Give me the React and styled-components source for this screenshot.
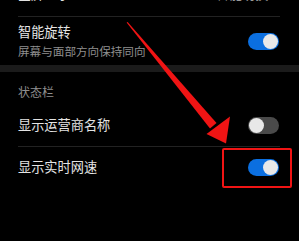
import React from "react";
import styled, { createGlobalStyle } from "styled-components";

const Global = createGlobalStyle`
  html, body { margin: 0; padding: 0; background: #000; }
  body { font-family: "Noto Sans CJK SC", "Noto Sans", sans-serif; }
`;

const Page = styled.div`
  position: relative;
  width: 299px;
  height: 241px;
  overflow: hidden;
  background: #000;
`;

const TopRow = styled.div`
  height: 16px;
  display: flex;
  justify-content: space-between;
  align-items: flex-end;
  padding: 0 24px 0 18px;
  overflow: hidden;
`;

const CutText = styled.span`
  font-size: 13px;
  line-height: 18px;
  color: ${(p) => (p.$muted ? "#9a9a9a" : "#e2e2e2")};
  transform: translateY(-13px);
`;

const Divider = styled.div`
  height: 1px;
  background: #222;
  margin: 0 19px 0 18px;
`;

const Row = styled.div`
  height: ${(p) => p.$h}px;
  display: flex;
  align-items: center;
  justify-content: space-between;
  padding: 0 20px 0 18px;
`;

const TextCol = styled.div`
  display: flex;
  flex-direction: column;
  gap: 2px;
`;

const Title = styled.div`
  font-size: 13.2px;
  line-height: 18px;
  color: #e4e4e4;
`;

const Sub = styled.div`
  font-size: 11.6px;
  line-height: 16px;
  color: #8f8f8f;
`;

const Band = styled.div`
  height: 7px;
  background: #1b1b1b;
`;

const SectionHeader = styled.div`
  padding: 12px 18px 0;
  height: 20px;
  font-size: 12px;
  line-height: 16px;
  color: #8f8f8f;
`;

const Track = styled.div`
  width: 31px;
  height: 17px;
  border-radius: 9px;
  background: ${(p) => (p.$on ? "#0b6fe0" : "#4a4a4a")};
  display: flex;
  align-items: center;
  justify-content: ${(p) => (p.$on ? "flex-end" : "flex-start")};
  padding: 0 1px;
  box-sizing: border-box;
`;

const Knob = styled.div`
  width: 15px;
  height: 15px;
  border-radius: 50%;
  background: #e8e8e8;
`;

const Toggle = ({ on }) => (
  <Track $on={on}>
    <Knob />
  </Track>
);

const Highlight = styled.div`
  position: absolute;
  left: 222px;
  top: 148px;
  width: 70px;
  height: 40px;
  box-sizing: border-box;
  border: 2px solid #f01414;
  border-radius: 2px;
`;

const ArrowSvg = styled.svg`
  position: absolute;
  left: 0;
  top: 0;
  pointer-events: none;
`;

export default function App() {
  return (
    <Page>
      <Global />
      <TopRow>
        <CutText>全屏显示</CutText>
        <CutText $muted>智能切换 ›</CutText>
      </TopRow>
      <Divider />
      <Row $h={48}>
        <TextCol>
          <Title>智能旋转</Title>
          <Sub>屏幕与面部方向保持同向</Sub>
        </TextCol>
        <Toggle on />
      </Row>
      <Band />
      <SectionHeader>状态栏</SectionHeader>
      <Row $h={42}>
        <Title>显示运营商名称</Title>
        <Toggle />
      </Row>
      <Divider />
      <Row $h={40}>
        <Title>显示实时网速</Title>
        <Toggle on />
      </Row>
      <Highlight />
      <ArrowSvg width="299" height="241" viewBox="0 0 299 241">
        <polygon
          fill="#f01414"
          points="126.6,22.6 127.6,22 216.5,123 210,128.5"
        />
        <polygon fill="#f01414" points="226,143.5 206.5,134 230,116.5" />
      </ArrowSvg>
    </Page>
  );
}
